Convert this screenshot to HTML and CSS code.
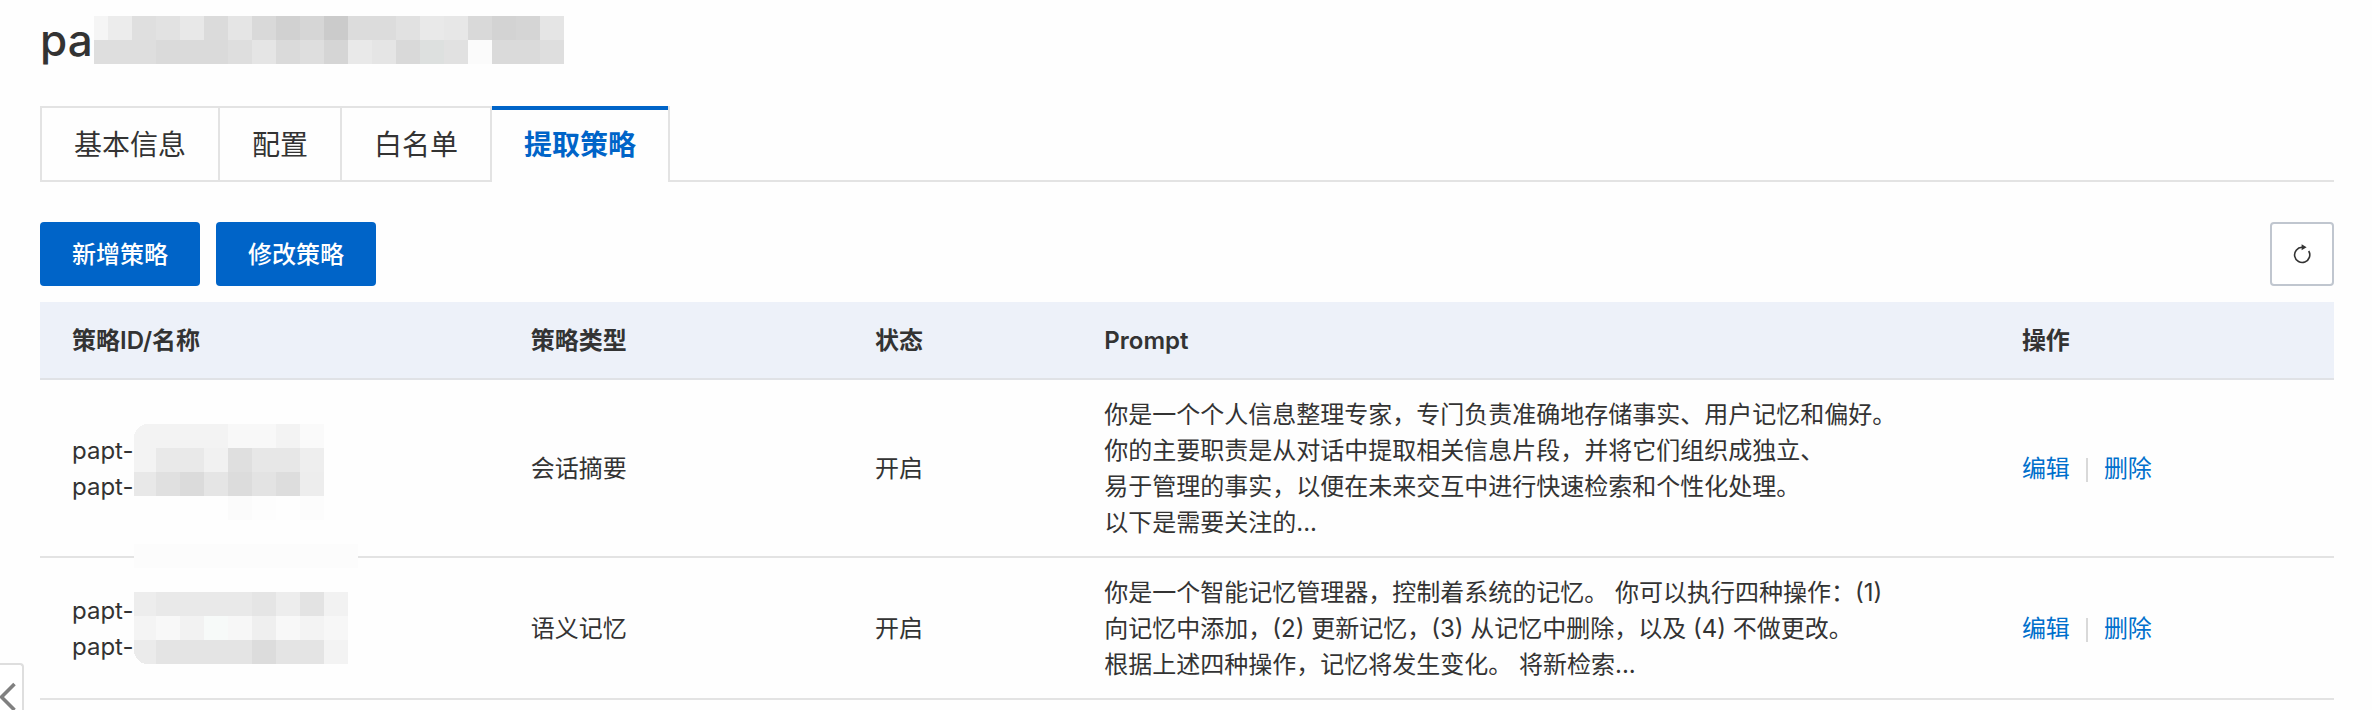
FILE: index.html
```html
<!DOCTYPE html>
<html lang="zh-CN">

<head>
<meta charset="utf-8" />
<title>提取策略</title>
<link rel="stylesheet" href="styles.css">
</head>

<body>
  <main class="page">

    <!-- 标题 -->
    <header class="page-title">
      <h1>pa</h1>
      <svg class="mask-title" width="470" height="48" viewBox="0 0 470 48" aria-hidden="true" shape-rendering="crispEdges">
        <rect width="470" height="48" fill="#dedede"/>
        <rect width="14" height="24" fill="#f5f5f5"/>
        <rect x="14" width="24" height="24" fill="#ececec"/>
        <rect x="38" width="24" height="24" fill="#dfdfdf"/>
        <rect x="62" width="24" height="24" fill="#e2e2e2"/>
        <rect x="86" width="24" height="24" fill="#e8e8e8"/>
        <rect x="110" width="24" height="24" fill="#dbdbdb"/>
        <rect x="134" width="24" height="24" fill="#e5e5e5"/>
        <rect x="158" width="24" height="24" fill="#d9d9d9"/>
        <rect x="182" width="24" height="24" fill="#d1d1d1"/>
        <rect x="206" width="24" height="24" fill="#d6d6d6"/>
        <rect x="230" width="24" height="24" fill="#cbcbcb"/>
        <rect x="254" width="48" height="24" fill="#dcdcdc"/>
        <rect x="302" width="24" height="24" fill="#e1e1e1"/>
        <rect x="326" width="24" height="24" fill="#e9e9e9"/>
        <rect x="350" width="24" height="24" fill="#e7e7e7"/>
        <rect x="374" width="24" height="24" fill="#d9d9d9"/>
        <rect x="398" width="24" height="24" fill="#d3d3d3"/>
        <rect x="422" width="24" height="24" fill="#d5d5d5"/>
        <rect x="446" width="24" height="24" fill="#e5e5e5"/>
        <rect x="62" y="24" width="72" height="24" fill="#dadada"/>
        <rect x="158" y="24" width="24" height="24" fill="#e5e5e5"/>
        <rect x="182" y="24" width="24" height="24" fill="#dadada"/>
        <rect x="230" y="24" width="24" height="24" fill="#d5d5d5"/>
        <rect x="254" y="24" width="24" height="24" fill="#e9e9e9"/>
        <rect x="278" y="24" width="24" height="24" fill="#e5e5e5"/>
        <rect x="302" y="24" width="24" height="24" fill="#d9d9d9"/>
        <rect x="326" y="24" width="24" height="24" fill="#dde0df"/>
        <rect x="350" y="24" width="24" height="24" fill="#e1e1e1"/>
        <rect x="374" y="24" width="24" height="24" fill="#fbfbfb"/>
        <rect x="398" y="24" width="48" height="24" fill="#dadada"/>
      </svg>
    </header>

    <!-- 标签页 -->
    <nav class="tabs" role="tablist">
      <button class="tab" role="tab" type="button">基本信息</button>
      <button class="tab" role="tab" type="button">配置</button>
      <button class="tab" role="tab" type="button">白名单</button>
      <button class="tab active" role="tab" type="button" aria-selected="true">提取策略</button>
    </nav>

    <div class="toolbar">
      <button class="btn" type="button">新增策略</button>
      <button class="btn" type="button">修改策略</button>
      <button class="btn-refresh" type="button" aria-label="刷新">
        <svg width="20" height="20" viewBox="0 0 20 20" aria-hidden="true">
          <path d="M16.7 7A7.6 7.6 0 1 1 10 3.3H11" fill="none" stroke="#333" stroke-width="1.6"/>
          <path d="M9.6 0.2L14.6 3.3L9.6 6.2Z" fill="#333"/>
        </svg>
      </button>
    </div>

    <!-- 策略列表 -->
    <div class="table-wrap">
      <table class="policy-table">
        <colgroup>
          <col class="col-id"><col class="col-type"><col class="col-status"><col class="col-prompt"><col class="col-action">
        </colgroup>
        <thead>
          <tr>
            <th>策略ID/名称</th>
            <th>策略类型</th>
            <th>状态</th>
            <th>Prompt</th>
            <th>操作</th>
          </tr>
        </thead>
        <tbody>
          <tr>
            <td>papt-<br>papt-</td>
            <td>会话摘要</td>
            <td>开启</td>
            <td>你是一个个人信息整理专家，专门负责准确地存储事实、用户记忆和偏好。<br>你的主要职责是从对话中提取相关信息片段，并将它们组织成独立、<br>易于管理的事实，以便在未来交互中进行快速检索和个性化处理。<br>以下是需要关注的...</td>
            <td><div class="actions"><a href="#">编辑</a><a href="#">删除</a></div></td>
          </tr>
          <tr>
            <td>papt-<br>papt-</td>
            <td>语义记忆</td>
            <td>开启</td>
            <td>你是一个智能记忆管理器，控制着系统的记忆。 你可以执行四种操作：(1)<br>向记忆中添加，(2) 更新记忆，(3) 从记忆中删除，以及 (4) 不做更改。<br>根据上述四种操作，记忆将发生变化。 将新检索...</td>
            <td><div class="actions"><a href="#">编辑</a><a href="#">删除</a></div></td>
          </tr>
        </tbody>
      </table>

      <!-- 马赛克盖住两行的 ID -->
      <svg class="mask-id" width="224" height="240" viewBox="0 0 224 240" aria-hidden="true" shape-rendering="crispEdges">
        <rect width="224" height="240" rx="14" fill="#fefefe"/>
        <path d="M14 0H94V24H0V14A14 14 0 0 1 14 0Z" fill="#f3f3f3"/>
        <rect x="94" width="48" height="24" fill="#f8f8f8"/>
        <rect x="142" width="24" height="24" fill="#f3f3f3"/>
        <rect x="166" width="24" height="24" fill="#fafafa"/>
        <rect y="24" width="22" height="24" fill="#f3f3f3"/>
        <rect x="22" y="24" width="48" height="24" fill="#e9e9e9"/>
        <rect x="70" y="24" width="24" height="24" fill="#f1f1f1"/>
        <rect x="94" y="24" width="24" height="24" fill="#dfdfdf"/>
        <rect x="118" y="24" width="48" height="24" fill="#e7e7e7"/>
        <rect x="166" y="24" width="24" height="24" fill="#eeeeee"/>
        <rect y="48" width="22" height="24" fill="#e8e8e8"/>
        <rect x="22" y="48" width="24" height="24" fill="#e0e0e0"/>
        <rect x="46" y="48" width="24" height="24" fill="#dbdbdb"/>
        <rect x="70" y="48" width="24" height="24" fill="#e5e5e5"/>
        <rect x="94" y="48" width="24" height="24" fill="#dcdcdc"/>
        <rect x="118" y="48" width="24" height="24" fill="#e3e3e3"/>
        <rect x="142" y="48" width="24" height="24" fill="#dddddd"/>
        <rect x="166" y="48" width="24" height="24" fill="#ededed"/>
        <rect x="94" y="72" width="24" height="24" fill="#fbfbfb"/>
        <rect x="118" y="72" width="24" height="24" fill="#fdfdfd"/>
        <rect x="166" y="72" width="24" height="24" fill="#fcfcfc"/>
        <rect y="120" width="224" height="24" fill="#fcfcfc"/>
        <rect y="168" width="22" height="24" fill="#ededed"/>
        <rect x="22" y="168" width="96" height="24" fill="#e9e9e9"/>
        <rect x="118" y="168" width="24" height="24" fill="#e5e5e5"/>
        <rect x="142" y="168" width="24" height="24" fill="#ededed"/>
        <rect x="166" y="168" width="24" height="24" fill="#e3e3e3"/>
        <rect x="190" y="168" width="24" height="24" fill="#f2f2f2"/>
        <rect y="192" width="22" height="24" fill="#f4f4f4"/>
        <rect x="22" y="192" width="24" height="24" fill="#f8f8f8"/>
        <rect x="46" y="192" width="24" height="24" fill="#f2f2f2"/>
        <rect x="70" y="192" width="24" height="24" fill="#f7faf9"/>
        <rect x="94" y="192" width="24" height="24" fill="#f7f7f7"/>
        <rect x="118" y="192" width="24" height="24" fill="#efefef"/>
        <rect x="142" y="192" width="24" height="24" fill="#f8f8f8"/>
        <rect x="166" y="192" width="24" height="24" fill="#f3f3f3"/>
        <rect x="190" y="192" width="24" height="24" fill="#f7f7f7"/>
        <path d="M0 216H22V240H12A14 14 0 0 1 0 226Z" fill="#ebebeb"/>
        <rect x="22" y="216" width="96" height="24" fill="#e4e4e4"/>
        <rect x="118" y="216" width="24" height="24" fill="#dcdcdc"/>
        <rect x="142" y="216" width="48" height="24" fill="#e4e4e4"/>
        <rect x="190" y="216" width="24" height="24" fill="#f3f3f3"/>
      </svg>
    </div>
  </main>

  <!-- 侧边栏收起按钮 -->
  <button class="collapse" type="button" aria-label="收起">
    <svg width="18" height="32" viewBox="0 0 18 32" aria-hidden="true">
      <path d="M14.5 3L1.5 16L14.5 29" fill="none" stroke="#808080" stroke-width="3.6"/>
    </svg>
  </button>
</body>

</html>
```

FILE: styles.css
```css
* {
  box-sizing: border-box;
}

body {
  margin: 0;
  background-color: #fefefe;
  color: #333;
  font-family: Inter, "Noto Sans CJK SC", sans-serif;
  font-size: 24px;
  line-height: 36px;
}

button {
  font-family: inherit;
  font-size: inherit;
  line-height: inherit;
  color: inherit;
  cursor: pointer;
}

.page {
  padding: 16px 38px 0 40px;
}

.page-title {
  display: flex;
  align-items: center;
  gap: 1px;
  height: 48px;
  margin-bottom: 42px;
}

.page-title h1 {
  margin: 0;
  font-size: 44px;
  line-height: 48px;
  font-weight: 500;
}

.mask-title {
  display: block;
}

/* 标签页 */
.tabs {
  display: flex;
  height: 76px;
}

.tabs::after {
  content: "";
  flex: 1;
  border-bottom: 2px solid #e3e3e3;
}

.tab {
  padding: 2px 32px 0;
  border: 2px solid #e3e3e3;
  border-left: none;
  background: none;
  font-size: 28px;
}

.tab:first-child {
  border-left: 2px solid #e3e3e3;
}

.tab.active {
  border-bottom: none;
  border-top: none;
  box-shadow: inset 0 4px #0064c8;
  color: #0064c8;
  font-weight: bold;
}

/* 按钮 */
.toolbar {
  display: flex;
  gap: 16px;
  margin: 40px 0 16px;
}

.btn {
  height: 64px;
  padding: 2px 32px 0;
  border: none;
  border-radius: 4px;
  background-color: #0064c8;
  color: #fff;
  font-weight: 500;
}

.btn-refresh {
  display: flex;
  align-items: center;
  justify-content: center;
  width: 64px;
  height: 64px;
  margin-left: auto;
  padding: 0;
  border: 2px solid #c0c6cf;
  border-radius: 4px;
  background-color: #fff;
}

/* 表格 */
.table-wrap {
  position: relative;
}

.policy-table {
  width: 100%;
  table-layout: fixed;
  border-collapse: separate;
  border-spacing: 0;
}

.col-type, .col-action {
  width: 15%;
}

.col-id {
  width: 20%;
}

.col-status {
  width: 10%;
}

.col-prompt {
  width: 40%;
}

.policy-table th {
  padding: 21px 32px 19px;
  background-color: #edf1f9;
  border-bottom: 2px solid #e0e2e6;
  text-align: left;
  font-weight: 600;
}

.policy-table td {
  padding: 17px 32px 15px;
  border-bottom: 2px solid #e3e3e3;
  white-space: nowrap;
}

.actions {
  display: flex;
  align-items: center;
}

.actions a {
  color: #0070cc;
  text-decoration: none;
}

.actions a + a::before {
  content: "";
  display: inline-block;
  width: 2px;
  height: 24px;
  margin: 0 16px;
  background-color: #d9d9d9;
  vertical-align: middle;
}

.mask-id {
  position: absolute;
  left: 94px;
  top: 122px;
}

.collapse {
  position: fixed;
  left: 0;
  bottom: 0;
  width: 24px;
  height: 47px;
  padding: 16px 0 0;
  border: 2px solid #dedede;
  border-left: none;
  border-bottom: none;
  border-radius: 0 4px 0 0;
  background-color: #fff;
  overflow: hidden;
}

.collapse svg {
  display: block;
}
```
